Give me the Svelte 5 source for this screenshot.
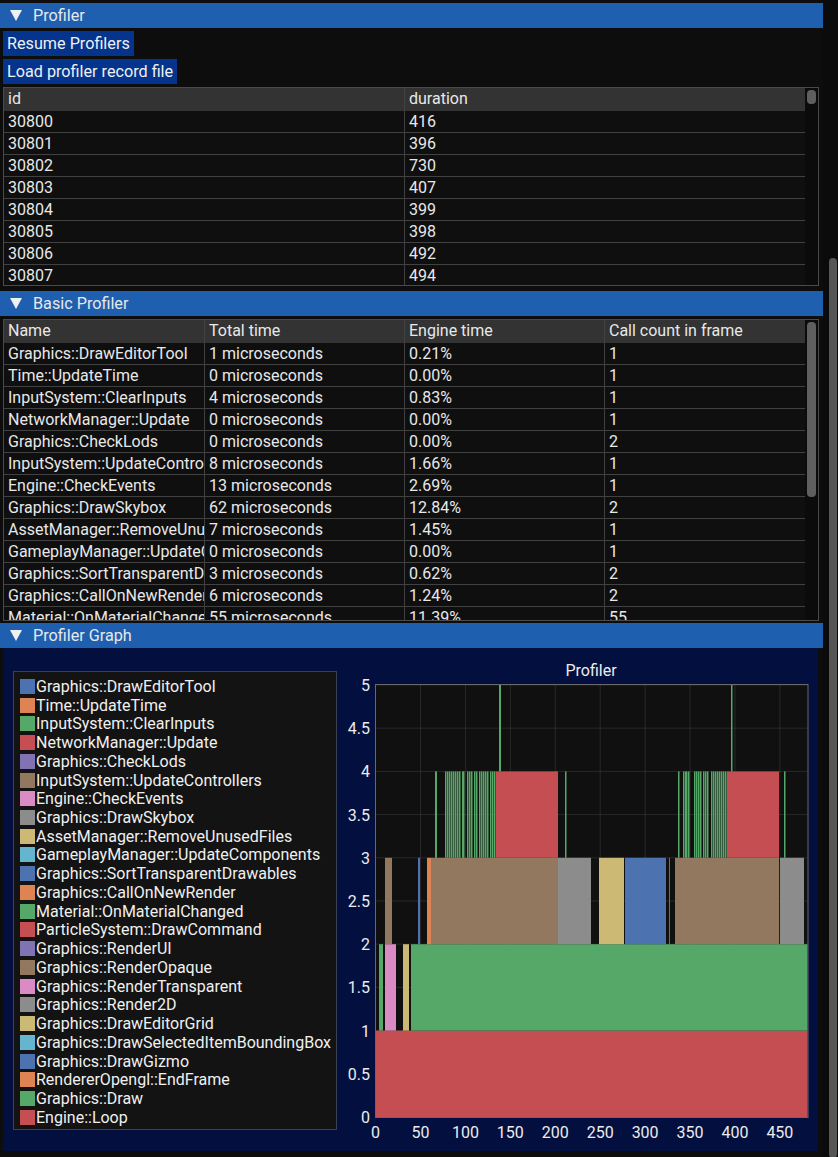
<script lang="ts">
  const colors = ["#4c72b0", "#dd8452", "#55a868", "#c44e52", "#8172b3", "#937860", "#da8bc3", "#8c8c8c", "#ccb974", "#64b5cd"];

  const records = [
    ["30800", "416"], ["30801", "396"], ["30802", "730"], ["30803", "407"],
    ["30804", "399"], ["30805", "398"], ["30806", "492"], ["30807", "494"],
  ];

  const basic = [
    ["Graphics::DrawEditorTool", "1 microseconds", "0.21%", "1"],
    ["Time::UpdateTime", "0 microseconds", "0.00%", "1"],
    ["InputSystem::ClearInputs", "4 microseconds", "0.83%", "1"],
    ["NetworkManager::Update", "0 microseconds", "0.00%", "1"],
    ["Graphics::CheckLods", "0 microseconds", "0.00%", "2"],
    ["InputSystem::UpdateControllers", "8 microseconds", "1.66%", "1"],
    ["Engine::CheckEvents", "13 microseconds", "2.69%", "1"],
    ["Graphics::DrawSkybox", "62 microseconds", "12.84%", "2"],
    ["AssetManager::RemoveUnusedFiles", "7 microseconds", "1.45%", "1"],
    ["GameplayManager::UpdateComponents", "0 microseconds", "0.00%", "1"],
    ["Graphics::SortTransparentDrawables", "3 microseconds", "0.62%", "2"],
    ["Graphics::CallOnNewRender", "6 microseconds", "1.24%", "2"],
    ["Material::OnMaterialChanged", "55 microseconds", "11.39%", "55"],
  ];

  const legend = [
    "Graphics::DrawEditorTool", "Time::UpdateTime", "InputSystem::ClearInputs", "NetworkManager::Update",
    "Graphics::CheckLods", "InputSystem::UpdateControllers", "Engine::CheckEvents", "Graphics::DrawSkybox",
    "AssetManager::RemoveUnusedFiles", "GameplayManager::UpdateComponents", "Graphics::SortTransparentDrawables",
    "Graphics::CallOnNewRender", "Material::OnMaterialChanged", "ParticleSystem::DrawCommand", "Graphics::RenderUI",
    "Graphics::RenderOpaque", "Graphics::RenderTransparent", "Graphics::Render2D", "Graphics::DrawEditorGrid",
    "Graphics::DrawSelectedItemBoundingBox", "Graphics::DrawGizmo", "RendererOpengl::EndFrame", "Graphics::Draw",
    "Engine::Loop",
  ];

  // chart is drawn in page pixels, see the svg viewBox
  const left = 376;
  const right = 807.5;
  const bottom = 1117;
  const unit = 86.4;
  const xTicks = [0, 50, 100, 150, 200, 250, 300, 350, 400, 450];
  const yTicks = [0, 0.5, 1, 1.5, 2, 2.5, 3, 3.5, 4, 4.5, 5];
  const xOf = (v: number) => 375.6 + v * 0.8984;
  const yOf = (v: number) => bottom - v * unit;

  // level, x0, x1, colour index
  const bars = [
    [0, left, right, 3],
    [1, 379, 383, 2], [1, 385, 396, 6], [1, 403, 409, 8], [1, 411, right, 2],
    [2, 385, 392, 5], [2, 418, 420, 0], [2, 427, 431, 1], [2, 431, 558, 5], [2, 558, 591, 7],
    [2, 599, 624, 8], [2, 625, 666, 0], [2, 669, 670, 0], [2, 675, 779, 5], [2, 780, 804, 7],
    [3, 496, 558, 3], [3, 727, 779, 3],
    [4, 499, 501, 2], [4, 731, 732.5, 2],
  ];

  const ticksA = [315, 321, 327, 333, 339, 345, 351, 357, 366, 369, 381, 387, 393, 402, 408, 417, 423, 429, 435, 441, 450, 456, 462, 675];
  const ticksB = [234, 249, 255, 258, 264, 282, 288, 294, 300, 309, 315, 321, 333, 339, 345, 351, 357, 363, 369, 375, 552];
  const thin = [...ticksA.map((x) => 340 + Math.round(x / 3)), ...ticksB.map((x) => 600 + Math.round(x / 3))];
</script>

<div class="page">
  <div class="main">
    <div class="header"><span class="arrow"></span>Profiler</div>
    <div class="content">
      <button>Resume Profilers</button>
      <button>Load profiler record file</button>
      <div class="table records">
        <div class="cols">
          <div class="row head two"><div>id</div><div>duration</div></div>
          {#each records as r}
            <div class="row two">
              {#each r as cell}<div>{cell}</div>{/each}
            </div>
          {/each}
        </div>
        <div class="bar"><div class="thumb short"></div></div>
      </div>
    </div>

    <div class="header second"><span class="arrow"></span>Basic Profiler</div>
    <div class="content tight">
      <div class="table basic">
        <div class="cols">
          <div class="row head four"><div>Name</div><div>Total time</div><div>Engine time</div><div>Call count in frame</div></div>
          {#each basic as r}
            <div class="row four">
              {#each r as cell}<div>{cell}</div>{/each}
            </div>
          {/each}
        </div>
        <div class="bar"><div class="thumb long"></div></div>
      </div>
    </div>

    <div class="header"><span class="arrow"></span>Profiler Graph</div>
    <div class="graph">
      <div class="legend">
        {#each legend as name, i}
          <div class="entry">
            <span class="swatch" style="background: {colors[i % 10]}"></span>{name}
          </div>
        {/each}
      </div>
      <svg width="481" height="503" viewBox="337 648 481 503">
        <text class="label" x="591" y="675.5" text-anchor="middle">Profiler</text>
        <rect x={left} y="685" width={right - left} height={bottom - 685} fill="#101010" />
        {#each xTicks as t}
          <line x1={xOf(t)} x2={xOf(t)} y1="685" y2={bottom} class="grid" />
          <text class="label" x={xOf(t)} y="1137.5" text-anchor="middle">{t}</text>
        {/each}
        {#each yTicks as t}
          <line x1={left} x2={right} y1={yOf(t)} y2={yOf(t)} class="grid" />
          <text class="label" x="370" y={yOf(t) + 6} text-anchor="end">{t}</text>
        {/each}
        {#each thin as x}
          <rect {x} y={yOf(4)} width="1.5" height={unit} fill={colors[2]} />
        {/each}
        <rect x="435" y={yOf(4)} width="2" height={unit} fill={colors[2]} />
        {#each bars as [level, x0, x1, c]}
          <rect x={x0} y={yOf(level + 1)} width={x1 - x0} height={unit} fill={colors[c]} />
        {/each}
        <rect x={left - 0.5} y="684.5" width={right - left + 1} height={bottom - 684} class="frame" />
      </svg>
    </div>
  </div>
  <div class="pagebar"><div class="pagethumb"></div></div>
</div>

<style>
  :global(body) {
    margin: 0;
    background: #0d0d0d;
  }

  .page {
    display: flex;
    width: 838px;
    height: 1157px;
    overflow: hidden;
    font-family: Roboto, sans-serif;
    font-size: 16px;
    color: #e8e8e8;
    background: #0d0d0d;
  }

  .main {
    width: 823px;
    padding-top: 3px;
    flex: none;
  }

  .header {
    display: flex;
    align-items: center;
    height: 25px;
    font-size: 16.2px;
    background: #1f5fb0;
  }

  .second {
    margin-top: 5px;
  }

  .arrow {
    width: 0;
    height: 0;
    margin: 0 11px 0 10px;
    border-left: 6.5px solid transparent;
    border-right: 6.5px solid transparent;
    border-top: 11px solid #f0f0f0;
  }

  .content {
    display: flex;
    flex-direction: column;
    align-items: flex-start;
    gap: 3px;
    padding: 3px 4px 0 3px;
  }

  .tight {
    padding-bottom: 2px;
  }

  button {
    height: 25px;
    padding: 0 4px;
    border: none;
    background: #04348c;
    color: #f0f0f0;
    font: inherit;
    font-size: 16.2px;
  }

  .table {
    display: flex;
    width: 816px;
    box-sizing: border-box;
    border: 1px solid #4a4a4a;
    overflow: hidden;
    background: #0f0f0f;
  }

  .records {
    height: 199px;
  }

  .basic {
    height: 302px;
  }

  .cols {
    flex: 1;
    min-width: 0;
  }

  .row {
    display: grid;
    height: 22px;
    box-sizing: border-box;
    border-bottom: 1px solid #414141;
  }

  .two {
    grid-template-columns: 400px 1fr;
  }

  .four {
    grid-template-columns: 200px 200px 200px 1fr;
  }

  .row > div {
    padding-left: 4px;
    line-height: 21px;
    white-space: nowrap;
    overflow: hidden;
    border-left: 1px solid #414141;
  }

  .row > div:first-child {
    border-left: none;
  }

  .head {
    height: 23px;
    background: #333333;
    border-bottom: none;
  }

  .head > div {
    line-height: 22px;
  }

  .bar {
    width: 13px;
    flex: none;
    padding: 2px 2px;
    box-sizing: border-box;
    background: #0b0b0b;
  }

  .thumb {
    width: 9px;
    border-radius: 4px;
    background: #5f5f5f;
  }

  .short {
    height: 14px;
  }

  .long {
    height: 175px;
  }

  .graph {
    display: flex;
    align-items: flex-start;
    width: 815px;
    height: 503px;
    margin-left: 3px;
    background: #03103f;
  }

  .legend {
    width: 324px;
    height: 459px;
    flex: none;
    box-sizing: border-box;
    margin: 23px 0 0 10px;
    padding: 5px 0 0 6px;
    border: 1px solid #3c4150;
    background: #131313;
  }

  .entry {
    display: flex;
    align-items: center;
    height: 18.74px;
    white-space: nowrap;
    color: #f0f0f0;
  }

  .swatch {
    width: 15px;
    height: 15px;
    margin-right: 1px;
    flex: none;
  }

  .label {
    font-size: 16px;
    fill: #ececec;
  }

  .grid {
    stroke: #ffffff;
    stroke-opacity: 0.1;
    stroke-width: 1;
  }

  .frame {
    fill: none;
    stroke: #686868;
    stroke-width: 1;
  }

  .pagebar {
    width: 15px;
    flex: none;
    padding-top: 258px;
    padding-left: 6px;
    box-sizing: border-box;
    background: #0b0b0b;
  }

  .pagethumb {
    width: 8px;
    height: 900px;
    border-radius: 4px;
    background: #565656;
  }
</style>
